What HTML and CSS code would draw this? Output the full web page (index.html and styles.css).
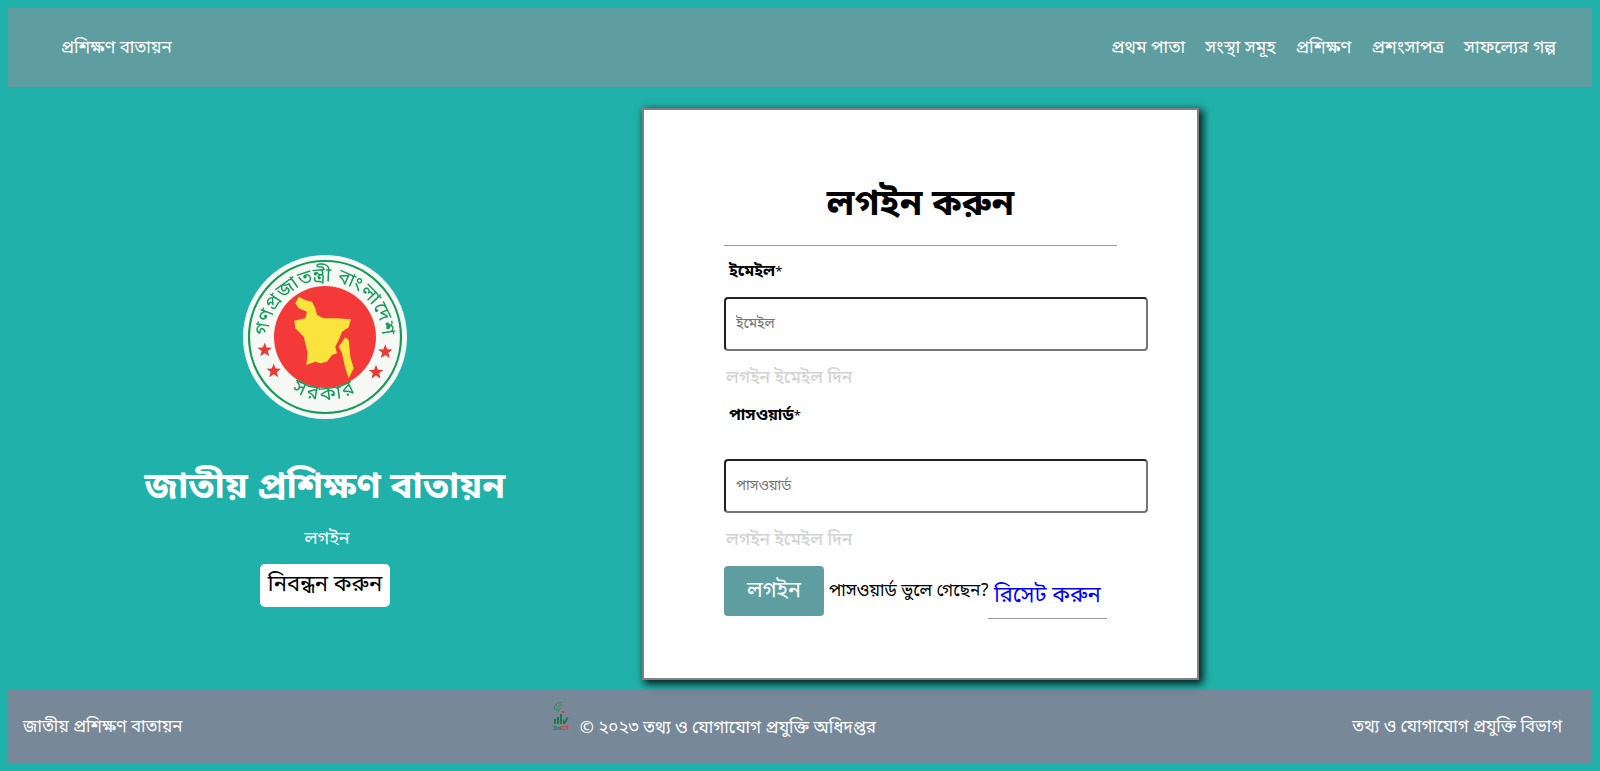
FILE: index.html
```html
<!DOCTYPE html>
<html lang="bn">
<head>
<meta charset="utf-8">
<title>জাতীয় প্রশিক্ষণ বাতায়ন</title>
<link rel="stylesheet" href="styles.css">
</head>
<body>
<header class="topbar">
  <a class="brand" href="#">প্রশিক্ষণ বাতায়ন</a>
  <nav class="nav">
    <a href="#">প্রথম পাতা</a>
    <a href="#">সংস্থা সমূহ</a>
    <a href="#">প্রশিক্ষণ</a>
    <a href="#">প্রশংসাপত্র</a>
    <a href="#">সাফল্যের গল্প</a>
  </nav>
</header>
<main class="main">
  <section class="intro">
    <svg class="seal" viewBox="0 0 164 164" aria-label="logo">
      <defs>
        <path id="topArc" d="M25.400 90 A57 57 0 1 1 138.600 90"/>
        <path id="botArc" d="M36 125 A63 63 0 0 0 128 125"/>
      </defs>
      <circle cx="82" cy="82" r="82" fill="#f6f8f6"/>
      <circle cx="82" cy="82" r="76" fill="none" stroke="#159a58" stroke-width="2.2"/>
      <circle cx="82" cy="82" r="51" fill="#f33a38"/>
      <path fill="#fbe33e" d="M55.700 41.700L62.300 45 69 46.700 72.300 53.300 74 60 80.700 63.300 94 63.300 108 64.300 105.700 72.300 99 76.700 95.700 85 92.300 91.700 94 98.300 89 100 84 106.700 77.300 108.300 72.300 106.700 63.300 110 64.700 98.300 62.300 88.300 60.700 81.700 52.300 73.300 51.300 65.700 62.300 63.300 64 56.700 55.700 53.300 52.300 48.300z"/>
      <path fill="#fbe33e" d="M102.300 82.300L105.700 85 107.300 101.700 110.700 113.300 105.700 123.300 102.300 113.300 99 98.300 95.700 91.700z"/>
      <g fill="#e93a3a">
        <polygon points="21.700,87.500 23.600,92.500 29,92.700 24.800,96 26.200,101.300 21.700,98.300 17.200,101.300 18.600,96 14.400,92.700 19.800,92.500"/>
        <polygon points="142.300,89.200 144.200,94.200 149.600,94.400 145.400,97.700 146.800,103 142.300,100 137.800,103 139.200,97.700 135,94.400 140.400,94.200"/>
        <polygon points="30.700,108.500 32.600,113.500 38,113.700 33.800,117 35.200,122.300 30.700,119.300 26.200,122.300 27.600,117 23.400,113.700 28.800,113.500"/>
        <polygon points="133,109.800 134.900,114.800 140.300,115 136.100,118.300 137.500,123.600 133,120.600 128.500,123.600 129.900,118.300 125.700,115 131.100,114.800"/>
      </g>
      <text class="seal-text"><textPath href="#topArc" startOffset="50%" text-anchor="middle">গণপ্রজাতন্ত্রী বাংলাদেশ</textPath></text>
      <text class="seal-low"><textPath href="#botArc" startOffset="50%" text-anchor="middle">সরকার</textPath></text>
    </svg>
    <h1 class="title">জাতীয় প্রশিক্ষণ বাতায়ন</h1>
    <p class="sub">লগইন</p>
    <a class="register" href="#">নিবন্ধন করুন</a>
  </section>
  <section class="card">
    <h2 class="card-title">লগইন করুন</h2>
    <hr class="rule">
    <label class="label first" for="em">ইমেইল<span class="req">*</span></label>
    <input class="field" id="em" type="text" placeholder="ইমেইল">
    <p class="hint">লগইন ইমেইল দিন</p>
    <label class="label second" for="pw">পাসওয়ার্ড<span class="req">*</span></label>
    <input class="field" id="pw" type="text" placeholder="পাসওয়ার্ড">
    <p class="hint">লগইন ইমেইল দিন</p>
    <div class="actions">
      <button class="login" type="button">লগইন</button>
      <span class="forgot">পাসওয়ার্ড ভুলে গেছেন?</span>
      <a class="reset" href="#">রিসেট করুন</a>
    </div>
  </section>
</main>
<footer class="footer">
  <span class="foot-left">জাতীয় প্রশিক্ষণ বাতায়ন</span>
  <span class="foot-mid">
    <svg class="doict" viewBox="0 0 17 28" aria-label="DoICT">
      <g fill="none" stroke="#2d8a57" stroke-width=".9">
        <path d="M1 8a8 8 0 0 1 8-8"/>
        <path d="M3 9a6 6 0 0 1 6-6"/>
        <path d="M5 10a4 4 0 0 1 4-4"/>
      </g>
      <circle cx="10" cy="10" r="1.300" fill="#e33"/>
      <g fill="#1b7a45">
        <rect x="1" y="17" width="2" height="5"/>
        <rect x="4" y="15" width="2" height="7"/>
        <rect x="7" y="12" width="2" height="10"/>
        <path d="M10 22v-5l1.500 2 2.500-4 1.500 1-3.500 6z"/>
      </g>
      <text class="doict-text" x="0" y="27.500"><tspan fill="#1b7a45">Do</tspan><tspan fill="#d33">ICT</tspan></text>
    </svg>
    <span class="foot-copy">© ২০২৩ তথ্য ও যোগাযোগ প্রযুক্তি অধিদপ্তর</span>
  </span>
  <span class="foot-right">তথ্য ও যোগাযোগ প্রযুক্তি বিভাগ</span>
</footer>
</body>
</html>
```
FILE: styles.css
```css
* { box-sizing: border-box; }
html, body { height: 100%; }
body {
  margin: 0;
  padding: 8px;
  background: #20b2aa;
  font-family: "Noto Sans Bengali", "Noto Sans", "Liberation Sans", sans-serif;
  font-size: 16px;
  color: #000;
  overflow: hidden;
}
a { text-decoration: none; }
.topbar {
  height: 79px;
  background: #5f9ea0;
  display: flex;
  align-items: center;
  justify-content: space-between;
  padding: 2px 36px 0 53px;
}
.brand { color: #fff; font-size: 17px; }
.nav a { color: #fff; font-size: 17.5px; }
.nav { display: flex; gap: 20px; }
.main {
  display: flex;
  height: 603px;
}
.intro {
  width: 634px;
  display: flex;
  flex-direction: column;
  align-items: center;
  padding-top: 168px;
}
.seal { width: 164px; height: 164px; display: block; filter: blur(.4px); }
.seal-text { font-size: 19.500px; fill: #159a58; }
.seal-low { font-size: 20px; letter-spacing: 3px; fill: #159a58; }
.title {
  margin: 48px 0 0;
  font-size: 37px;
  line-height: 44px;
  font-weight: 700;
  color: #fff;
}
.sub { margin: 15px 0 0 4px; color: #fff; font-size: 18px; line-height: 26px; }
.register {
  margin-top: 12px;
  background: #fff;
  color: #000;
  font-size: 22px;
  line-height: 43px;
  height: 43px;
  padding: 0 8px;
  border-radius: 5px;
}
.card {
  width: 557px;
  height: 572px;
  margin: 21px 0 0;
  padding: 75px 49px 0 80px;
  background: #fff;
  border: 2px solid #808080;
  box-shadow: 3px 3px 8px 1px rgba(0, 0, 0, .85);
}
.card-title {
  margin: 0 31px 0 0;
  text-align: center;
  font-size: 36.5px;
  line-height: 42px;
  font-weight: 700;
}
.rule {
  margin: 18px 31px 0 0;
  border: 0;
  border-top: 1px solid #999;
}
.label { display: block; font-weight: 700; font-size: 16px; line-height: 24px; padding-left: 5px; }
.label.first { margin-top: 14px; }
.label.second { margin-top: 12px; margin-bottom: 30px; }
.req { font-weight: 400; font-size: 13px; }
.field {
  display: block;
  width: 424px;
  height: 54px;
  margin-top: 12px;
  padding: 0 10px;
  border: 2px inset #767676;
  border-radius: 4px;
  font: inherit;
  font-size: 14px;
  background: #fff;
}
.second + .field { margin-top: 0; }
.hint { margin: 15px 0 0; padding-left: 2px; color: #d3d3d3; font-size: 17.3px; line-height: 26px; font-weight: 500; }
.actions { display: flex; align-items: flex-start; margin-top: 12px; }
.login {
  width: 100px;
  height: 50px;
  background: #5f9ea0;
  color: #fff;
  border: 0;
  border-radius: 4px;
  font: inherit;
  font-size: 21.5px;
}
.forgot { margin: 12px 0 0 5px; font-size: 17.2px; line-height: 28px; white-space: nowrap; }
.reset {
  margin-left: -1px;
  padding: 15px 6px 5px;
  height: 53px;
  border-bottom: 1px solid #999;
  color: #00f;
  font-size: 22px;
  line-height: 32px;
  white-space: nowrap;
}
.footer {
  height: 73px;
  background: #778899;
  color: #fff;
  display: flex;
  align-items: center;
  justify-content: space-between;
  padding: 3px 30px 0 15px;
  font-size: 16.8px;
}
.foot-mid { display: flex; align-items: center; gap: 10px; margin-left: -106px; }
.foot-copy { font-size: 17px; }
.doict { width: 17px; height: 28px; display: block; margin-bottom: 25px; }
.doict-text { font-family: "Liberation Sans", sans-serif; font-size: 5.500px; font-weight: 700; }
```
